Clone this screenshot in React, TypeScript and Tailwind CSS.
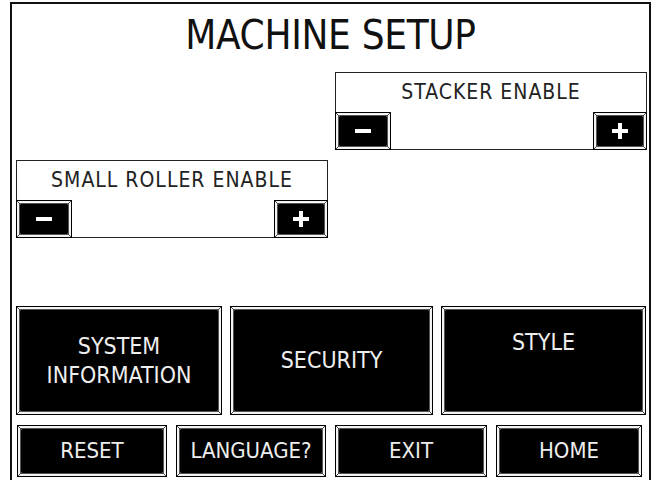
import clsx from "clsx";
import type { ReactNode } from "react";

const font = { fontFamily: '"DejaVu Sans Condensed", "DejaVu Sans", sans-serif' };

function Corners() {
	return (
		<>
			<svg className="absolute left-0 top-0" width="4" height="4">
				<line x1="0" y1="0" x2="4" y2="4" stroke="#444" strokeWidth="1" />
			</svg>
			<svg className="absolute right-0 top-0" width="4" height="4">
				<line x1="4" y1="0" x2="0" y2="4" stroke="#444" strokeWidth="1" />
			</svg>
			<svg className="absolute left-0 bottom-0" width="4" height="4">
				<line x1="0" y1="4" x2="4" y2="0" stroke="#444" strokeWidth="1" />
			</svg>
			<svg className="absolute right-0 bottom-0" width="4" height="4">
				<line x1="4" y1="4" x2="0" y2="0" stroke="#444" strokeWidth="1" />
			</svg>
		</>
	);
}

function Bevel({ className, inner, children }: { className?: string; inner?: string; children?: ReactNode }) {
	return (
		<div className={clsx("relative border border-black bg-[#f4f4f4] p-[2px]", className)}>
			<div className={clsx("h-full bg-black border border-[#555] flex text-[#eee]", inner ?? "items-center justify-center")}>
				{children}
			</div>
			<Corners />
		</div>
	);
}

function Minus() {
	return <div className="w-[16px] h-[4px] bg-white" />;
}

function Plus() {
	return (
		<svg width="16" height="16" viewBox="0 0 16 16">
			<rect x="6" y="0" width="4" height="16" fill="#fff" />
			<rect x="0" y="6" width="16" height="4" fill="#fff" />
		</svg>
	);
}

function Setting({ label, className }: { label: string; className?: string }) {
	return (
		<div className={clsx("w-[312px] h-[78px] border border-[#222] flex flex-col", className)}>
			<div className="flex-1 pt-[9px] text-center text-[21px] leading-none tracking-[1px] text-[#222]">{label}</div>
			<div className="flex justify-between">
				<Bevel className="w-[56px] h-[38px] -ml-px -mb-px">
					<Minus />
				</Bevel>
				<Bevel className="w-[54px] h-[38px] -mr-px -mb-px">
					<Plus />
				</Bevel>
			</div>
		</div>
	);
}

export default function App() {
	return (
		<div className="w-[654px] h-[480px] bg-white overflow-hidden pl-[10px] pt-[2px]" style={font}>
			<div className="w-[641px] h-[500px] border-2 border-[#111] flex flex-col">
				<h1 className="mt-[11px] h-[57px] text-center text-[40px] leading-none tracking-[-0.3px] text-[#111]">
					MACHINE SETUP
				</h1>
				<Setting label="STACKER ENABLE" className="self-end mr-[2px]" />
				<Setting label="SMALL ROLLER ENABLE" className="ml-[4px] mt-[10px] w-[310px]" />
				<div className="mt-[68px] ml-[4px] flex gap-[8px] text-[23px] leading-[1.25]">
					<Bevel className="w-[206px] h-[109px]" inner="flex-col items-center justify-center">
						<span>SYSTEM</span>
						<span>INFORMATION</span>
					</Bevel>
					<Bevel className="w-[203px] h-[109px]">SECURITY</Bevel>
					<Bevel className="w-[205px] h-[109px]" inner="items-start justify-center pt-[18px]">
						STYLE
					</Bevel>
				</div>
				<div className="mt-[10px] ml-[5px] flex gap-[9px] text-[22px] leading-none">
					<Bevel className="w-[150px] h-[52px]">RESET</Bevel>
					<Bevel className="w-[150px] h-[52px]">LANGUAGE?</Bevel>
					<Bevel className="w-[152px] h-[52px]">EXIT</Bevel>
					<Bevel className="w-[146px] h-[52px]">HOME</Bevel>
				</div>
			</div>
		</div>
	);
}
